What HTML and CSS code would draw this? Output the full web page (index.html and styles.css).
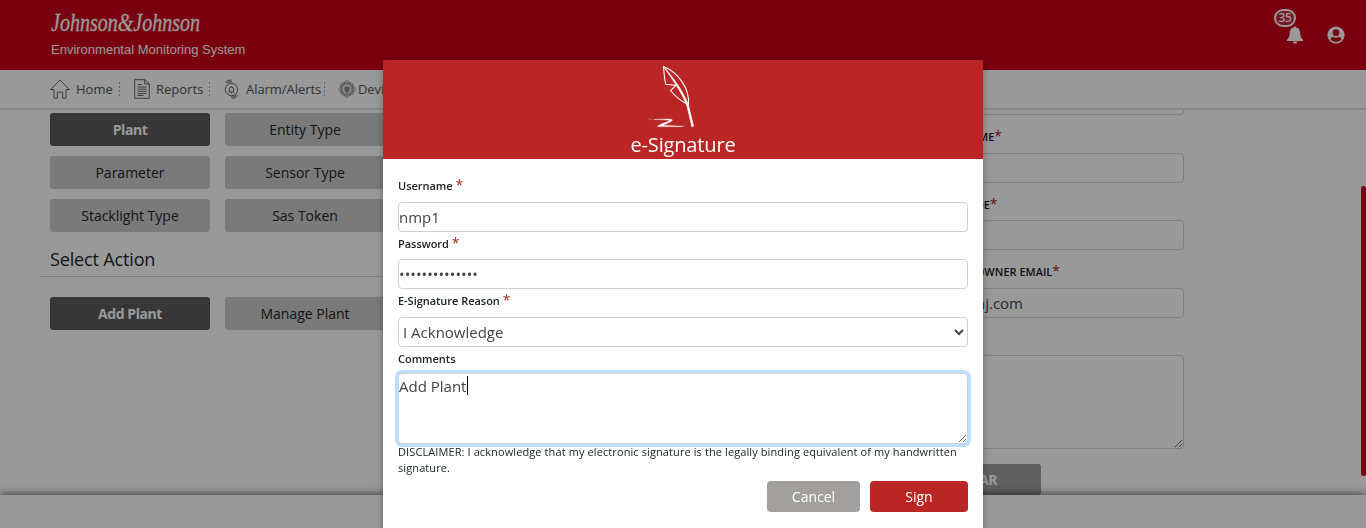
FILE: index.html
```html
<!DOCTYPE html>
<html lang="en">
<head>
<meta charset="utf-8">
<title>Environmental Monitoring System</title>
<link rel="stylesheet" href="styles.css">
</head>
<body>
<div class="page">
  <header class="topbar">
    <div class="brand">
      <svg class="logo" width="152" height="30" viewBox="0 0 152 30"><text x="1" y="20" textLength="149" lengthAdjust="spacingAndGlyphs">Johnson&amp;Johnson</text></svg>
      <div class="product">Environmental Monitoring System</div>
    </div>
    <div class="tools">
      <div class="bell">
        <svg width="18" height="18" viewBox="0 0 18 18"><path fill="#fff" d="M8 1.200a1 1 0 0 1 2 0c2.800.5 4 2.700 4.200 5.400.2 4 .8 5.200 3 7.400v1H.8v-1c2.200-2.200 2.800-3.400 3-7.400C4 3.900 5.200 1.700 8 1.200zM6.800 15.500h4.400a2.200 2.200 0 0 1-4.400 0z"/></svg>
        <span class="badge">35</span>
      </div>
      <svg class="user" width="18" height="18" viewBox="0 0 18 18"><circle cx="9" cy="9" r="8.600" fill="#fff"/><circle class="hole" cx="9" cy="6.700" r="3.400"/><path class="hole" d="M3.300 12.700C4 11.300 5.500 10.800 6.500 11c1.500 1 3.500 1 5 0 1-.2 2.500.3 3.200 1.700-2.700 4.200-8.700 4.200-11.400 0z"/></svg>
    </div>
  </header>
  <nav class="menu">
    <div class="item home"><svg width="20" height="20" viewBox="0 0 20 20"><path d="M.7 10.500 10 1l9.300 9.500H16v8.700h-3.300v-6H7.300v6H4v-8.700z"/></svg><span>Home</span></div>
    <div class="item reports"><svg width="16" height="20" viewBox="0 0 16 20"><path d="M.7.7h10L15.300 5v14.300H.7zM10.700.7V5h4.600M4 5.500h4M3.500 8h9M3.500 10.200h9M3.500 12.400h9M3.500 14.600h9M3.500 16.500h6"/></svg><span>Reports</span></div>
    <div class="item alarm"><svg width="16" height="20" viewBox="0 0 16 20"><circle cx="7.500" cy="10.500" r="6.200"/><path d="M5.500 12.500V10a2 2 0 0 1 4 0v2.500l.7.500H4.800zM7.500 7v1M7 14.300h1M1.500 3.500Q4 .8 7.500 1M3 4Q5 2.500 8 2.600M7 18q3 .2 5.500-2M8 19.500q3.500 0 5.500-3"/></svg><span>Alarm/Alerts</span></div>
    <div class="item device"><svg width="18" height="18" viewBox="0 0 18 18"><rect x="3" y="3" width="12" height="12" rx="2"/><ellipse cx="9" cy="9" rx="8.300" ry="4.300"/><ellipse cx="9" cy="9" rx="4.300" ry="8.300"/><circle cx="9" cy="9" r="6"/><path class="core" d="M7 6.500l1 .7h2l1-.7V11l-2 1.500L7 11z"/></svg><span>Devices</span></div>
  </nav>
  <main class="content">
    <section class="left">
      <div class="grid">
        <div class="tile active">Plant</div><div class="tile">Entity Type</div>
        <div class="tile">Parameter</div><div class="tile">Sensor Type</div>
        <div class="tile">Stacklight Type</div><div class="tile">Sas Token</div>
      </div>
      <h2 class="section-title">Select Action</h2>
      <div class="grid actions"><div class="tile active">Add Plant</div><div class="tile">Manage Plant</div></div>
    </section>
    <section class="right">
      <div class="field first"></div>
      <div class="label name">NAME<b>*</b></div>
      <div class="field"></div>
      <div class="label code">CODE<b>*</b></div>
      <div class="field"></div>
      <div class="label email">OWNER EMAIL<b>*</b></div>
      <div class="field"><span class="mail">jnj.com</span></div>
      <textarea class="notes"></textarea>
      <div class="clear">CLEAR</div>
    </section>
    <div class="scroll"></div>
  </main>
  <footer class="footer"></footer>
</div>
<div class="overlay">
  <div class="modal">
    <div class="modal-head">
      <svg width="50" height="64" viewBox="0 0 50 64"><path d="M15.500 1.500C29 7 42 22 40.500 40 33 36 26 30 22.500 25.500l5.500-5-10.200-1.200C16.500 15 16 8 15.500 1.500z" fill="none" stroke="#fff" stroke-width="1.100"/><path d="M15.500 1.500C24 11 36 27 40.700 41L45.500 61l-1.500 1L39 41C34 27 24 14 15.500 1.500z" fill="#fff" stroke="#fff" stroke-width=".7"/><path d="M0 54.200h5M6 54.300l10-.3q8-.2 8.500 1c0 1.500-6 3.500-9 5.300l20 .9-2 .5-24-.1c-1-1.500 10-4.800 12-5.900-2-1-10-.9-15.500-1.100z" fill="#fff" stroke="#fff" stroke-width=".3"/></svg>
      <div class="modal-title">e-Signature</div>
    </div>
    <div class="modal-body">
      <label class="caption">Username <b>*</b></label>
      <input class="control" type="text" value="nmp1">
      <label class="caption short">Password <b>*</b></label>
      <input class="control secret" type="password" value="abcdefghijklmn">
      <label class="caption">E-Signature Reason <b>*</b></label>
      <select class="control reason"><option>I Acknowledge</option></select>
      <label class="caption last">Comments</label>
      <div class="comment-box"><textarea class="control comments">Add Plant</textarea><i class="caret"></i></div>
      <p class="disclaimer">DISCLAIMER: I acknowledge that my electronic signature is the legally binding equivalent of my handwritten signature.</p>
      <div class="buttons"><button class="btn cancel">Cancel</button><button class="btn sign">Sign</button></div>
    </div>
  </div>
</div>
</body>
</html>
```
FILE: styles.css
```css
* { box-sizing: border-box; }
body { margin: 0; height: 528px; overflow: hidden; font-family: "Open Sans", "Noto Sans", sans-serif; color: #212529; }
.page { height: 528px; display: flex; flex-direction: column; background: #fff; }
.topbar { height: 70px; flex: none; background: #ca0019; display: flex; justify-content: space-between; padding: 11px 21px 0 50px; }
.logo { display: block; fill: #fff; font: italic 25px "Liberation Serif", serif; stroke: #fff; stroke-width: .3px; overflow: visible; }
.product { font: 13px/16px "Liberation Sans", Arial, sans-serif; color: #fff; padding: 1px 0 0 1px; }
.tools { display: flex; gap: 23px; padding-top: 15px; }
.bell { position: relative; width: 18px; height: 18px; }
.bell svg, .user { display: block; }
.user .hole { fill: #ca0019; }
.badge { position: absolute; left: -12px; top: -17px; width: 22px; height: 18px; border: 2px solid #fff; border-radius: 9px; background: #ca2238; color: #fff; font: 600 12px/14px "Open Sans", sans-serif; letter-spacing: -.3px; text-align: center; }
.menu { height: 40px; flex: none; border-bottom: 2px solid #e2e2e2; display: flex; align-items: center; padding-left: 50px; font-size: 13px; color: #555; }
.item { display: flex; align-items: center; height: 20px; }
.item svg { fill: none; stroke: #555; stroke-width: .9; flex: none; }
.item.device svg { stroke: #777; stroke-width: .7; }
.item .core { fill: #888; }
.home { width: 70px; gap: 6px; }
.reports { width: 90px; gap: 6px; padding-left: 14px; }
.alarm { width: 115px; gap: 6px; padding-left: 14px; letter-spacing: -.05px; }
.device { gap: 2px; padding-left: 13px; letter-spacing: -.1px; }
.home, .reports, .alarm { background: repeating-linear-gradient(to bottom, #aaa 0 2px, transparent 2px 4px) right 3px / 1px 14px no-repeat; }
.content { height: 385px; flex: none; display: flex; overflow: hidden; }
.left { width: 960px; padding: 3px 0 0 40px; flex: none; }
.grid { display: grid; grid-template-columns: 160px 160px; gap: 10px 15px; padding-left: 10px; }
.tile { height: 33px; border-radius: 3px; background: #cbcbcb; font-size: 14px; line-height: 34px; text-align: center; color: #212529; }
.active { background: #5c5c5c; color: #fff; font-weight: 700; letter-spacing: -.45px; }
.section-title { margin: 0 0 20px; height: 45px; padding: 14px 10px 0; border-bottom: 1px solid #d4d4d4; font-size: 18px; line-height: 27px; font-weight: 400; letter-spacing: -.15px; }
.right { width: 224px; flex: none; }
.field { height: 30px; border: 1px solid #d5d5d5; border-radius: 4px; font-size: 15px; line-height: 28px; color: #444; }
.first { height: 5px; border-top: 0; border-radius: 0 0 4px 4px; }
.label { height: 38px; line-height: 41px; font-size: 11px; font-weight: 600; text-align: right; white-space: nowrap; color: #17191c; }
.code { height: 37px; }
.name { width: 42px; } .code { width: 32px; } .email { width: 100px; }
.label b, .caption b { color: #a22a2a; font-weight: 400; font-size: 14px; }
.mail { display: block; width: 62px; text-align: right; }
.notes { display: block; width: 224px; height: 94px; margin: 37px 0 15px; border: 1px solid #d5d5d5; border-radius: 4px; resize: both; }
.clear { width: 121px; height: 31px; margin-left: -40px; border-radius: 3px; background: #a0a0a0; color: #fff; font: 700 14px/32px "Open Sans", sans-serif; letter-spacing: -.5px; padding-right: 44px; text-align: right; }
.scroll { width: 5px; height: 290px; margin: 76px 0 0 auto; border-radius: 3px; background: #ca0019; }
.footer { height: 33px; background: #fff; box-shadow: 0 -1px 8px rgba(0,0,0,.6); position: relative; }
.overlay { position: fixed; inset: 0; z-index: 10; background: rgba(0,0,0,.4); display: flex; justify-content: center; padding-top: 60px; }
.modal { width: 600px; height: 480px; background: #fff; box-shadow: 0 2px 8px rgba(0,0,0,.3); }
.modal-head { height: 99px; background: #ba2626; color: #fff; display: flex; flex-direction: column; align-items: center; padding-top: 5px; }
.modal-head svg { display: block; flex: none; margin-right: 21px; }
.modal-title { font-size: 20px; line-height: 32px; letter-spacing: -.15px; }
.modal-body { padding: 15px; }
.caption { display: block; height: 28px; line-height: 22px; font-size: 11px; font-weight: 600; color: #212529; letter-spacing: -.03px; }
.short { height: 27px; }
.last { height: 26px; line-height: 24px; }
.control { display: block; width: 570px; height: 30px; margin: 0; padding: 1px 0; border: 1px solid #d1d1d1; border-radius: 4px; background: #fff; color: #444; font: 15px "Open Sans", sans-serif; outline: 0; }
.reason { padding: 0; }
.comment-box { position: relative; }
.comments { height: 71px; padding: 2px 0 0; line-height: 20px; resize: both; box-shadow: 0 0 0 3px #bfdeff; }
.caret { position: absolute; left: 69px; top: 3px; width: 1px; height: 19px; background: #111; }
.disclaimer { margin: 0; font-size: 11px; line-height: 16px; letter-spacing: .1px; }
.buttons { display: flex; justify-content: flex-end; gap: 10px; padding-top: 5px; }
.btn { height: 31px; border: 0; border-radius: 4px; color: #fff; font: 14px "Open Sans", sans-serif; padding: 0; }
.cancel { width: 93px; background: #a2a09e; }
.sign { width: 98px; background: #ba2626; }
```
